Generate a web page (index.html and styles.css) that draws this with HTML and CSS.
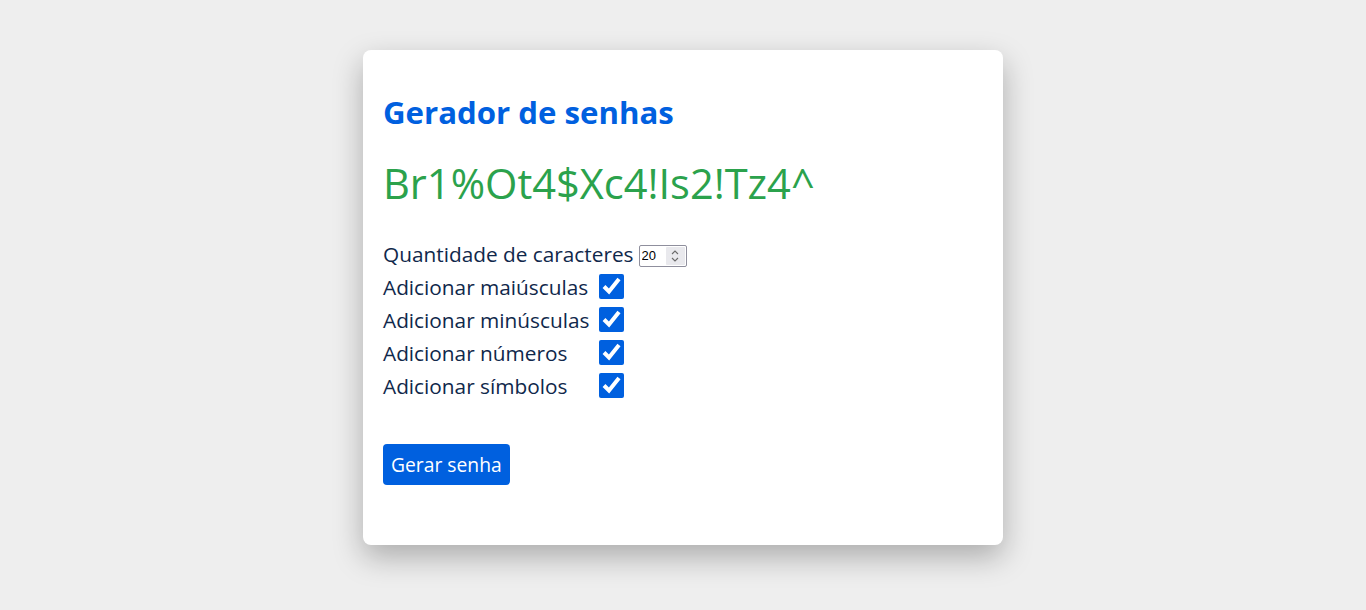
FILE: index.html
```html
<!DOCTYPE html>
<html lang="pt-BR">
<head>
<meta charset="utf-8">
<title>Gerador de senhas</title>
<link rel="stylesheet" href="styles.css">
</head>
<body>
<main class="card">
  <h1 class="title">Gerador de senhas</h1>
  <div class="password">Br1%Ot4$Xc4!Is2!Tz4^</div>
  <div class="options">
    <div class="row">
      <label for="qtd" class="label-q">Quantidade de caracteres</label>
      <span class="num">
        <input id="qtd" class="num-input" type="text" value="20">
        <span class="spin">
          <svg width="10" height="16" viewBox="0 0 10 16" aria-hidden="true">
            <path d="M2 6 L5 3 L8 6" fill="none" stroke="#6b6b6b" stroke-width="1.1"/>
            <path d="M2 10 L5 13 L8 10" fill="none" stroke="#6b6b6b" stroke-width="1.1"/>
          </svg>
        </span>
      </span>
    </div>
    <div class="row">
      <label for="mai" class="label">Adicionar maiúsculas</label>
      <input id="mai" class="check" type="checkbox" checked>
    </div>
    <div class="row">
      <label for="min" class="label">Adicionar minúsculas</label>
      <input id="min" class="check" type="checkbox" checked>
    </div>
    <div class="row">
      <label for="numb" class="label">Adicionar números</label>
      <input id="numb" class="check" type="checkbox" checked>
    </div>
    <div class="row">
      <label for="sym" class="label">Adicionar símbolos</label>
      <input id="sym" class="check" type="checkbox" checked>
    </div>
  </div>
  <button class="btn" type="button">Gerar senha</button>
</main>
</body>
</html>
```
FILE: styles.css
```css
html {
  background: #eeeeee;
  min-height: 100%;
}
body {
  margin: 0;
  padding: 50px 0 60px 0;
  font-family: "Open Sans", "Liberation Sans", sans-serif;
  color: #10284b;
}
.card {
  box-sizing: border-box;
  width: 640px;
  height: 495px;
  margin: 0 auto;
  background: #ffffff;
  border-radius: 8px;
  box-shadow: 0 12px 30px rgba(0, 0, 0, 0.28);
  padding: 41px 20px 0 20px;
  display: flex;
  flex-direction: column;
  align-items: flex-start;
}
.title {
  margin: 0;
  font-size: 31.2px;
  line-height: 42px;
  font-weight: 700;
  color: #0060df;
}
.password {
  margin-top: 22px;
  font-size: 41.6px;
  line-height: 56px;
  color: #2ba24c;
}
.options {
  margin-top: 26px;
  display: flex;
  flex-direction: column;
}
.row {
  display: flex;
  align-items: center;
  height: 33px;
  font-size: 20.8px;
}
.label {
  min-width: 206px;
}
.label-q {
  margin-right: 5px;
}
.num {
  display: inline-flex;
  align-items: center;
  box-sizing: border-box;
  width: 48px;
  height: 22px;
  margin-top: 4px;
  border: 1px solid #8f8f9d;
  border-radius: 2px;
  background: #ffffff;
  padding: 1px 1px 1px 2px;
}
.num-input {
  width: 22px;
  border: none;
  outline: none;
  padding: 0;
  margin: 0;
  font-size: 13px;
  font-family: "Liberation Sans", sans-serif;
  color: #000000;
  background: transparent;
}
.spin {
  display: flex;
  align-items: center;
  justify-content: center;
  width: 19px;
  height: 18px;
  margin-left: auto;
  background: #e9e9ed;
  border-radius: 1px;
}
.check {
  width: 25px;
  height: 25px;
  margin: 0 0 0 10px;
  accent-color: #0060df;
}
.btn {
  margin-top: 42px;
  height: 41px;
  padding: 0 8px;
  border: none;
  border-radius: 4px;
  background: #0060df;
  color: #ffffff;
  font-size: 19.3px;
  font-family: "Open Sans", sans-serif;
}
```
